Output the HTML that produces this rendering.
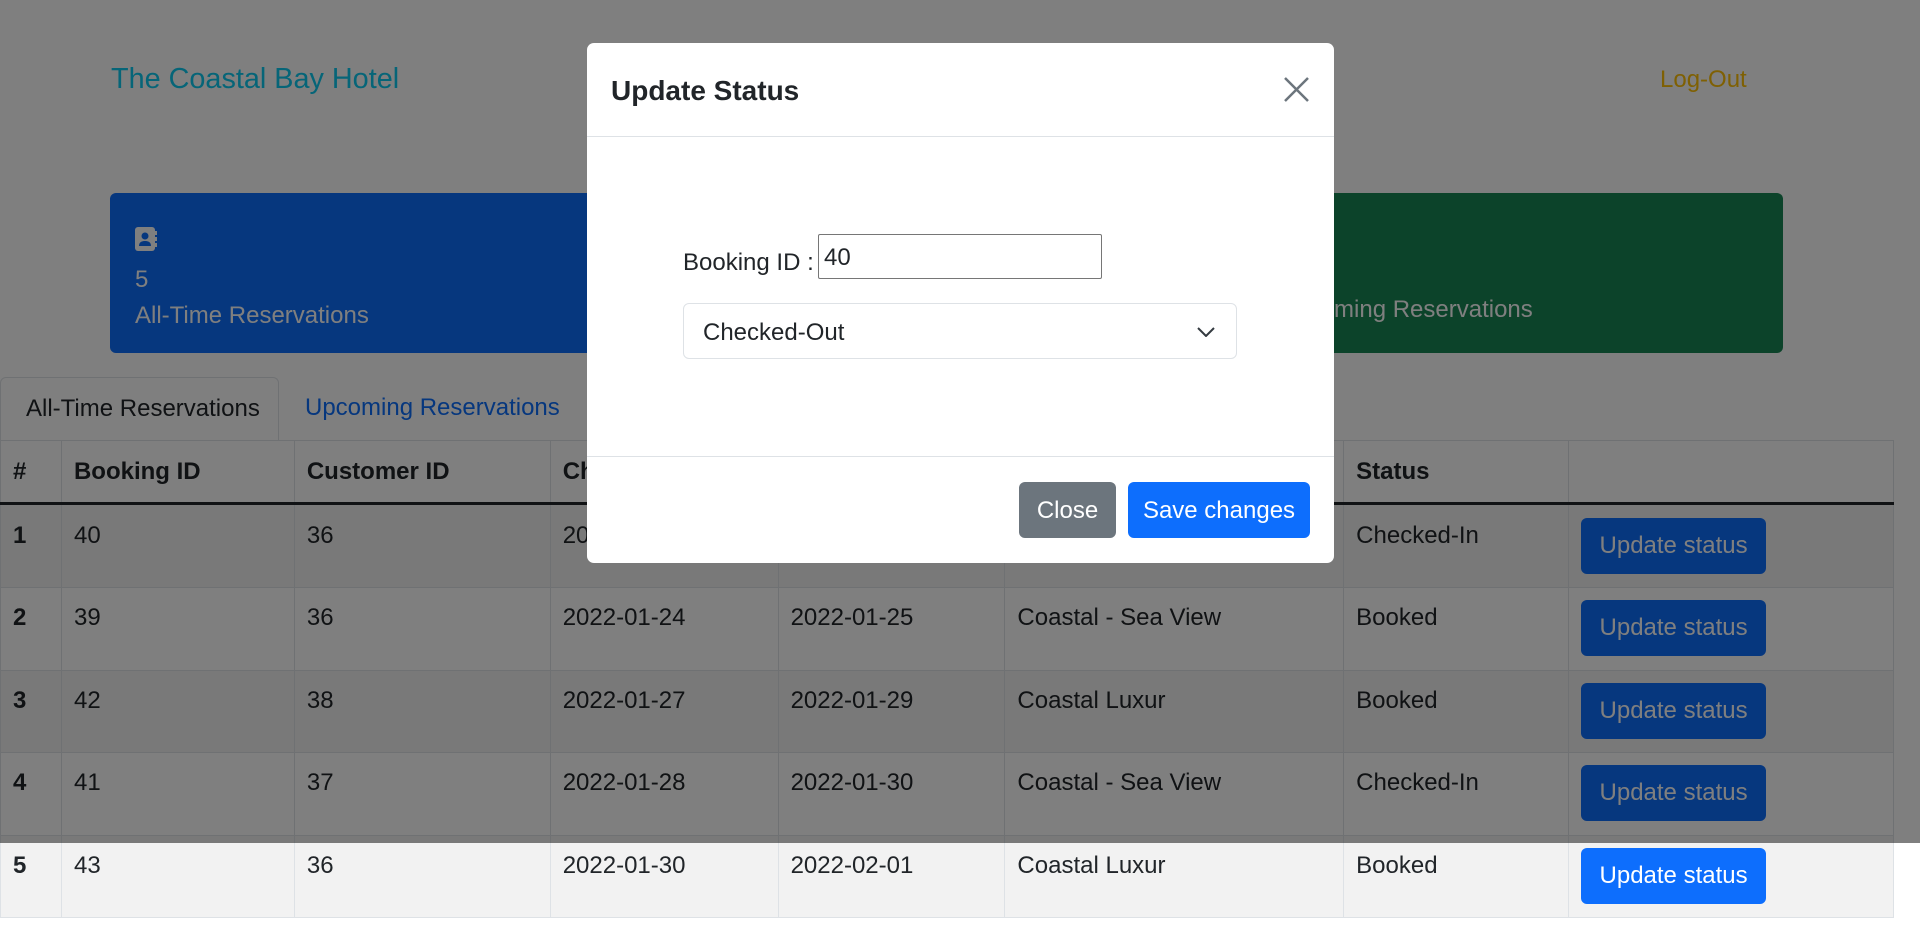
<!DOCTYPE html>
<html><head><meta charset="utf-8"><style>
*{box-sizing:border-box;margin:0;padding:0}
body{width:1920px;height:940px;background:#fff;font-family:"Liberation Sans",Arial,sans-serif;font-size:24px;color:#212529;position:relative;overflow:hidden}
.a{position:absolute}
.title{left:111px;top:62px;font-size:28.8px;color:#0dcaf0;line-height:34px;white-space:nowrap}
.logout{left:1660px;top:65px;color:#ffc107;line-height:30px}
.card{top:193px;height:160px;border-radius:6px;color:#fff;padding:27px 0 0 25px;line-height:36px}
.tab{top:377px;height:64px;line-height:62px;white-space:nowrap}
table{position:absolute;left:0;top:440px;width:1894px;border-collapse:collapse}
td,th{border:1px solid #dee2e6;padding:12px 12px;vertical-align:top;text-align:left;line-height:36px}
th{font-weight:bold;height:62px;border-bottom:3px solid #212529;padding-top:13px}
tr.o td{background:#f2f2f2}
td{height:82.6px}
tr.first td{height:84px;padding-top:13px}
.btn{display:inline-block;color:#fff;border-radius:6px;line-height:56px;height:56px;text-align:center}
.ub{background:#0d6efd;width:185px;margin-top:0}
.ov{left:0;top:0;width:1920px;height:843px;background:rgba(0,0,0,.5)}
.modal{left:587px;top:43px;width:747px;height:520px;background:#fff;border-radius:7px}
</style></head><body>
<div class="a title">The Coastal Bay Hotel</div>
<div class="a logout">Log-Out</div>
<div class="a card" style="left:110px;width:530px;background:#0d6efd">
<div style="height:36px"><svg width="22" height="26" viewBox="0 0 22 26" style="display:block;margin-top:6px"><rect x="0" y="1" width="20" height="24" rx="3" fill="#fff"/><rect x="19" y="5" width="3" height="4" fill="#fff"/><rect x="19" y="11" width="3" height="4" fill="#fff"/><rect x="19" y="17" width="3" height="4" fill="#fff"/><circle cx="10" cy="10" r="3.5" fill="#0d6efd"/><path d="M4 20c0-4 3-5 6-5s6 1 6 5z" fill="#0d6efd"/></svg></div>
<div>5</div><div>All-Time Reservations</div></div>
<div class="a card" style="left:665px;width:565px;background:#dc3545"></div>
<div class="a card" style="left:1253px;width:530px;background:#198754">
<div style="height:36px"></div><div>5</div><div>Upcoming Reservations</div></div>
<div class="a tab" style="left:0;width:279px;border:1px solid #dee2e6;border-bottom:none;border-radius:6px 6px 0 0;padding-left:25px;background:#fff">All-Time Reservations</div>
<div class="a tab" style="left:305px;color:#0d6efd">Upcoming Reservations</div>
<table>
<colgroup><col style="width:61px"><col style="width:233px"><col style="width:256px"><col style="width:228px"><col style="width:227px"><col style="width:339px"><col style="width:225px"><col style="width:325px"></colgroup>
<tr><th>#</th><th>Booking ID</th><th>Customer ID</th><th>Check-In</th><th>Check-Out</th><th>Room</th><th>Status</th><th></th></tr>
<tr class="o first"><td><b>1</b></td><td>40</td><td>36</td><td>2022-01-22</td><td>2022-01-23</td><td>Coastal Luxur</td><td>Checked-In</td><td><span class="btn ub">Update status</span></td></tr>
<tr><td><b>2</b></td><td>39</td><td>36</td><td>2022-01-24</td><td>2022-01-25</td><td>Coastal - Sea View</td><td>Booked</td><td><span class="btn ub">Update status</span></td></tr>
<tr class="o"><td><b>3</b></td><td>42</td><td>38</td><td>2022-01-27</td><td>2022-01-29</td><td>Coastal Luxur</td><td>Booked</td><td><span class="btn ub">Update status</span></td></tr>
<tr><td><b>4</b></td><td>41</td><td>37</td><td>2022-01-28</td><td>2022-01-30</td><td>Coastal - Sea View</td><td>Checked-In</td><td><span class="btn ub">Update status</span></td></tr>
<tr class="o"><td><b>5</b></td><td>43</td><td>36</td><td>2022-01-30</td><td>2022-02-01</td><td>Coastal Luxur</td><td>Booked</td><td><span class="btn ub">Update status</span></td></tr>
</table>
<div class="a ov"></div>
<div class="a modal">
<div class="a" style="left:24px;top:30px;font-size:28px;font-weight:bold;line-height:36px">Update Status</div>
<svg class="a" style="left:696px;top:33px" width="27" height="27" viewBox="0 0 27 27"><path d="M2 2L25 25M25 2L2 25" stroke="#6c757d" stroke-width="2.5"/></svg>
<div class="a" style="left:0;top:93px;width:747px;height:1px;background:#dee2e6"></div>
<div class="a" style="left:96px;top:202px;line-height:36px">Booking ID :</div>
<div class="a" style="left:231px;top:191px;width:284px;height:45px;border:1px solid #767676;border-radius:2px;padding-left:5px;line-height:45px">40</div>
<div class="a" style="left:96px;top:260px;width:554px;height:56px;border:1px solid #dee2e6;border-radius:6px;padding-left:19px;line-height:57px">Checked-Out
<svg class="a" style="left:513px;top:23px" width="18" height="10" viewBox="0 0 18 10"><path d="M1 1l8 8 8-8" fill="none" stroke="#343a40" stroke-width="2"/></svg></div>
<div class="a" style="left:0;top:413px;width:747px;height:1px;background:#dee2e6"></div>
<div class="a btn" style="left:432px;top:439px;width:97px;background:#6c757d;line-height:58px">Close</div>
<div class="a btn" style="left:541px;top:439px;width:182px;background:#0d6efd;line-height:58px">Save changes</div>
</div>
</body></html>
